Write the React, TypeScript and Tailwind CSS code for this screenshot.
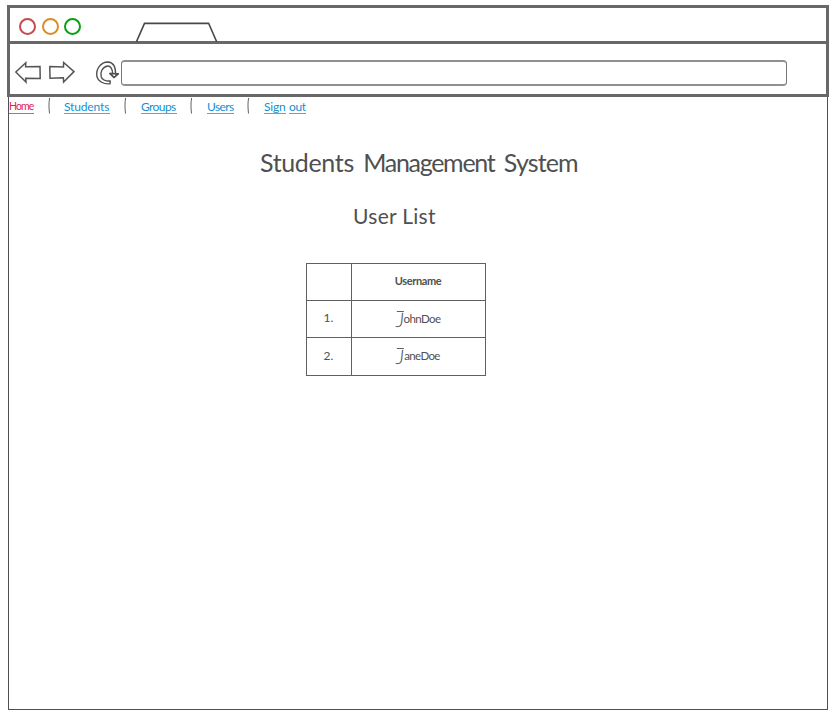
import type { ReactNode } from "react";

function NavLink({ children, className }: { children: ReactNode; className: string }) {
  return (
    <a className={`block h-[17px] whitespace-nowrap leading-[19px] ${className}`}>{children}</a>
  );
}

function Separator({ className }: { className: string }) {
  return (
    <svg className={`h-[17px] w-[4px] shrink-0 ${className}`} viewBox="0 0 4 17" fill="none" stroke="#606060">
      <path d="M2.6 1 C1.8 6 1.8 10 2.5 16.5" strokeWidth="1" />
    </svg>
  );
}

function Toolbar() {
  return (
    <div className="flex h-[50px] items-start">
      <svg className="ml-[5px] mt-[17px] h-[24px] w-[60px] shrink-0" viewBox="15 61 60 24" fill="none" stroke="#555" strokeWidth="1.5">
        <path d="M15.8 72 L25.8 62.8 L25.6 66.8 L40 66.6 L40.2 78.5 L25.7 78.2 L26 82 Z" />
        <path d="M49.8 66.6 L63.5 67 L63.6 62.5 L74 71.6 L63.6 82 L63.4 77.8 L50 78.2 Z" />
      </svg>
      <svg className="ml-[20px] mt-[16px] h-[26px] w-[25px] shrink-0" viewBox="95 60 25 26" fill="none" stroke="#505050" strokeWidth="1.4" strokeLinejoin="round">
        <path d="M110.3 81 L110 83.8 C104 84.4 98 81.7 96.8 75.8 C96 69 100.5 62.2 107.8 62 C113 62.2 115.6 67 115.6 74 L118.4 73.7 L114 77.6 L109.8 73.4 L112.7 73.7 C112.5 69.2 110.8 65.8 107.6 66 C102.6 66.8 99.7 72.2 101.2 77 C102.8 80.6 106.5 81.2 110.3 81 Z" />
        <path d="M110 73.5 L118.3 73.8 L114 77.5 Z" />
      </svg>
      <div className="ml-[1px] mt-[16px] h-[26px] w-[666px] rounded-[4px] border-[1.5px] border-[#777] border-y-2 border-y-[#909090]" />
    </div>
  );
}

function Browser() {
  return (
    <header className="ml-[7px] h-[92px] w-[822px] border-[3px] border-[#686868] bg-white">
      <div className="flex h-[36px] items-start border-b-[3px] border-[#686868]">
        <div className="ml-[9px] mt-[10px] flex gap-[5.5px]">
          <i className="h-[17px] w-[17px] rounded-full border-[2px] border-[#c04c50]" />
          <i className="h-[17px] w-[17px] rounded-full border-[2px] border-[#df8b24]" />
          <i className="h-[17px] w-[17px] rounded-full border-[2px] border-[#07a20f]" />
        </div>
        <svg className="ml-[54px] mt-[13px] h-[21px] w-[84px]" viewBox="135 21 84 21" fill="none" stroke="#484848" strokeWidth="1.6">
          <path d="M136.3 42 L144.5 23.4 L208.6 23.2 L216.8 42" />
        </svg>
      </div>
      <Toolbar />
    </header>
  );
}

const users = [
  { id: "1.", initial: "J", rest: "ohnDoe" },
  { id: "2.", initial: "J", rest: "aneDoe" },
];

export default function App() {
  return (
    <div className="h-[715px] w-[836px] overflow-hidden bg-white pt-[5px] font-['Lato','Open_Sans',sans-serif] text-[#505050]">
      <Browser />
      <main className="ml-[8px] h-[613px] w-[820px] border border-t-0 border-[#505050]">
        <nav className="flex h-[19px] items-start text-[12px] text-[#168fd0]">
          <NavLink className="w-[25px] border-b border-[#f05080] text-[10.5px] tracking-[-0.9px] text-[#e3205f]">Home</NavLink>
          <Separator className="ml-[13px]" />
          <NavLink className="ml-[13px] w-[46px] border-b border-[#4fabd8] tracking-[-0.15px]">Students</NavLink>
          <Separator className="ml-[13px]" />
          <NavLink className="ml-[14px] w-[36px] border-b border-[#4fabd8] tracking-[-0.6px]">Groups</NavLink>
          <Separator className="ml-[12px]" />
          <NavLink className="ml-[14px] w-[27px] border-b border-[#4fabd8] tracking-[-0.6px]">Users</NavLink>
          <Separator className="ml-[12px]" />
          <NavLink className="ml-[14px] w-[22px] border-b border-[#4fabd8] tracking-[-0.2px]">Sign</NavLink>
          <NavLink className="ml-[3px] w-[17px] border-b border-[#4fabd8] tracking-[-0.4px]">out</NavLink>
        </nav>
        <h1 className="ml-[251px] mt-[26px] h-[40px] whitespace-nowrap text-[25px] leading-[40px] [word-spacing:3px]">
          <span className="tracking-[-0.35px]">Students</span>{" "}
          <span className="tracking-[-1.3px]">Management</span>{" "}
          <span className="tracking-[-0.85px]">System</span>
        </h1>
        <h2 className="ml-[344px] mt-[18px] h-[32px] whitespace-nowrap text-[21px] leading-[32px] tracking-[0.3px]">User List</h2>
        <table className="ml-[296.5px] mt-[31px] w-[179px] table-fixed border-collapse text-center text-[12px] [&_td]:border [&_td]:border-[#606060] [&_td]:p-0 [&_th]:border [&_th]:border-[#606060] [&_th]:p-0">
          <colgroup>
            <col className="w-[45px]" />
            <col className="w-[134px]" />
          </colgroup>
          <thead>
            <tr className="h-[36.5px]">
              <th />
              <th className="pb-[1px]! text-[11px] font-bold tracking-[-0.4px]">Username</th>
            </tr>
          </thead>
          <tbody>
            {users.map((user) => (
              <tr key={user.id} className="h-[37.5px]">
                <td className="pb-[1px]!">{user.id}</td>
                <td>
                  <span className="flex h-[30px] items-center justify-center text-[11.5px] tracking-[-0.6px]">
                    <span className="mr-[1px] mt-[1px] h-[17px] w-[7px] -skew-x-6 border-t border-[#606060] text-right text-[20px] font-light leading-[15px]">{user.initial}</span>
                    <span className="pb-[1px]">{user.rest}</span>
                  </span>
                </td>
              </tr>
            ))}
          </tbody>
        </table>
      </main>
    </div>
  );
}
